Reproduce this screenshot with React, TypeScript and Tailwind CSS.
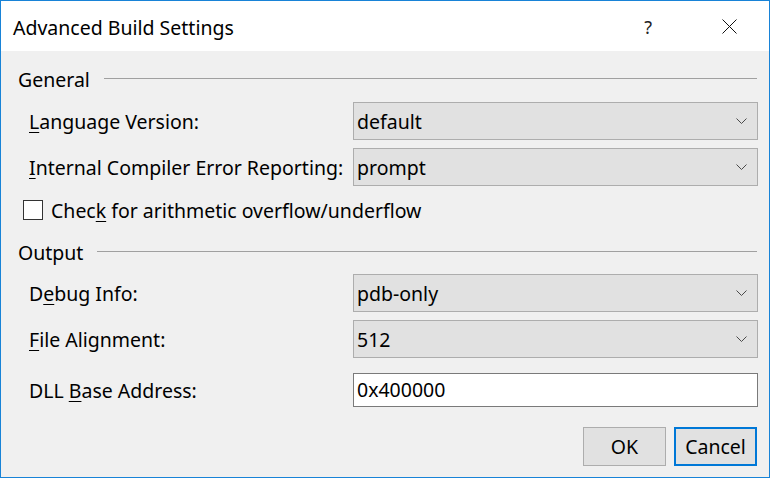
import React from "react";

function U({ children }: { children: React.ReactNode }) {
  return <span className="underline decoration-1 underline-offset-[3px]">{children}</span>;
}

function Chevron() {
  return (
    <svg width="11" height="7" viewBox="0 0 11 7" className="shrink-0">
      <polyline points="0.5,0.5 5.5,5.5 10.5,0.5" fill="none" stroke="#4a4a4a" strokeWidth="1" />
    </svg>
  );
}

function Select({ value }: { value: string }) {
  return (
    <div className="flex-1 h-[38px] border border-[#adadad] bg-[#e1e1e1] flex items-center justify-between pl-[3px] pr-[10px]">
      <span className="mt-[1px]">{value}</span>
      <Chevron />
    </div>
  );
}

function Row({ label, children, className }: { label: React.ReactNode; children: React.ReactNode; className: string }) {
  return (
    <div className={"flex items-center " + className}>
      <div className="w-[324px] ml-[11px] shrink-0 mt-[1px]">{label}</div>
      {children}
    </div>
  );
}

function GroupHeader({ title, className }: { title: string; className: string }) {
  return (
    <div className={"flex items-center h-[26px] " + className}>
      <span>{title}</span>
      <div className="flex-1 h-px bg-[#a0a0a0] ml-[14px] mr-[1px] mb-[4px]" />
    </div>
  );
}

export default function App() {
  return (
    <div className="w-[770px] h-[478px] border border-[#1883d7] bg-[#f0f0f0] flex flex-col text-[19.5px] leading-[26px] text-black font-['Noto_Sans',sans-serif]">
      <div className="h-[50px] bg-white flex items-center pl-[12px] shrink-0">
        <span className="flex-1 mt-[3px]">Advanced Build Settings</span>
        <span className="text-[18px] mr-[70px] text-[#222] mt-[1px]">?</span>
        <svg width="15" height="15" viewBox="0 0 15 15" className="mr-[32px]">
          <line x1="0.5" y1="0.5" x2="14.5" y2="14.5" stroke="#111" strokeWidth="1" />
          <line x1="14.5" y1="0.5" x2="0.5" y2="14.5" stroke="#111" strokeWidth="1" />
        </svg>
      </div>
      <div className="flex flex-col pl-[17px] pr-[11px]">
        <GroupHeader title="General" className="mt-[16px]" />
        <Row className="mt-[9px]" label={<><U>L</U>anguage Version:</>}>
          <Select value="default" />
        </Row>
        <Row className="mt-[8px]" label={<><U>I</U>nternal Compiler Error Reporting:</>}>
          <Select value="prompt" />
        </Row>
        <div className="flex items-center h-[26px] mt-[11px] ml-[5px]">
          <div className="w-[20px] h-[20px] border border-[#333333] bg-white shrink-0" />
          <span className="ml-[8px] mt-[1px]">
            Chec<U>k</U> for arithmetic overflow/underflow
          </span>
        </div>
        <GroupHeader title="Output" className="mt-[17px]" />
        <Row className="mt-[8px]" label={<>D<U>e</U>bug Info:</>}>
          <Select value="pdb-only" />
        </Row>
        <Row className="mt-[8px]" label={<><U>F</U>ile Alignment:</>}>
          <Select value="512" />
        </Row>
        <Row className="mt-[15px]" label={<>DLL <U>B</U>ase Address:</>}>
          <div className="flex-1 h-[34px] border border-[#7a7a7a] bg-white flex items-center pl-[3px]">0x400000</div>
        </Row>
        <div className="flex justify-end gap-[8px] mt-[20px] mr-[1px]">
          <button className="w-[83px] h-[39px] border border-[#adadad] bg-[#e1e1e1] flex items-center justify-center">OK</button>
          <button className="w-[83px] h-[39px] border-2 border-[#0078d7] bg-[#e1e1e1] flex items-center justify-center">Cancel</button>
        </div>
      </div>
    </div>
  );
}
